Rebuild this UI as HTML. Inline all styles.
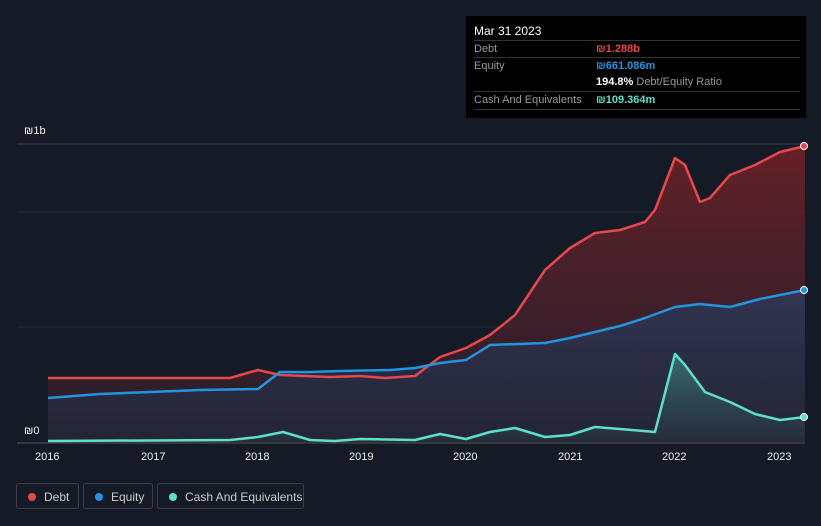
<!DOCTYPE html>
<html><head><meta charset="utf-8"><style>
body{margin:0;width:821px;height:526px;background:#151b26;font-family:"Liberation Sans",sans-serif;overflow:hidden;position:relative}
.tt{position:absolute;left:466px;top:16px;width:340px;height:102px;background:#000;}
.tt .h{position:absolute;left:8px;top:8px;color:#fff;font-size:12px}
.row{position:absolute;left:8px;width:326px;border-top:1px solid #333;height:17px;font-size:11px;color:#999;line-height:17px}
.row span{position:absolute;left:122px;font-weight:bold}
.leg{position:absolute;top:483px;height:26px;border:1px solid #3a3f4a;border-radius:3px;color:#ccc;font-size:12px;line-height:26px;box-sizing:border-box}
.leg i{position:absolute;left:11px;top:9px;width:8px;height:8px;border-radius:50%}
.leg b{font-weight:normal;position:absolute;left:27px}
.ax{position:absolute;color:#eee;font-size:11px}
</style></head><body>
<svg width="821" height="526" style="position:absolute;left:0;top:0">
<defs>
<linearGradient id="gd" x1="0" y1="0" x2="0" y2="1"><stop offset="0" stop-color="#7a2226" stop-opacity=".8"/><stop offset="1" stop-color="#3a2230" stop-opacity=".5"/></linearGradient>
<linearGradient id="ge" x1="0" y1="0" x2="0" y2="1"><stop offset="0" stop-color="#2d3a5a" stop-opacity=".8"/><stop offset="1" stop-color="#222638" stop-opacity=".8"/></linearGradient>
<linearGradient id="gc" x1="0" y1="0" x2="0" y2="1"><stop offset="0" stop-color="#3f8a80" stop-opacity=".7"/><stop offset="1" stop-color="#2a3a45" stop-opacity=".4"/></linearGradient>
</defs>
<line x1="17" y1="144" x2="805" y2="144" stroke="#3a3f4a"/>
<line x1="17" y1="212" x2="805" y2="212" stroke="#262b36"/>
<line x1="17" y1="327" x2="805" y2="327" stroke="#262b36"/>
<line x1="17" y1="443" x2="805" y2="443" stroke="#555"/>
<polygon fill="url(#gd)" points="48,442 48,378 230,378 258,370 280,375 330,377 360,376 385,378 415,376 440,357 466,348 490,335 515,315 545,270 570,248 595,233 620,230 645,222 655,210 675,158 685,165 700,202 710,198 730,175 755,165 780,152 805,146 805,442"/>
<polygon fill="url(#ge)" points="48,442 48,398 100,394 150,392 200,390 258,389 280,372 310,372 340,371 390,370 415,368 440,363 466,360 490,345 545,343 570,338 595,332 620,326 645,318 675,307 700,304 730,307 760,299 805,290 805,442"/>
<polygon fill="url(#gc)" points="48,442 48,441 230,440 258,437 283,432 310,440 335,441 360,439 415,440 440,434 466,439 490,432 515,428 545,437 570,435 595,427 620,429 655,432 675,354 685,365 705,392 730,402 755,414 780,420 805,417 805,442"/>
<polyline fill="none" stroke="#e5484d" stroke-width="2.5" stroke-linejoin="round" points="48,378 230,378 258,370 280,375 330,377 360,376 385,378 415,376 440,357 466,348 490,335 515,315 545,270 570,248 595,233 620,230 645,222 655,210 675,158 685,165 700,202 710,198 730,175 755,165 780,152 805,146"/>
<polyline fill="none" stroke="#2394df" stroke-width="2.5" stroke-linejoin="round" points="48,398 100,394 150,392 200,390 258,389 280,372 310,372 340,371 390,370 415,368 440,363 466,360 490,345 545,343 570,338 595,332 620,326 645,318 675,307 700,304 730,307 760,299 805,290"/>
<polyline fill="none" stroke="#5ce0cc" stroke-width="2.5" stroke-linejoin="round" points="48,441 230,440 258,437 283,432 310,440 335,441 360,439 415,440 440,434 466,439 490,432 515,428 545,437 570,435 595,427 620,429 655,432 675,354 685,365 705,392 730,402 755,414 780,420 805,417"/>
<circle cx="804" cy="146" r="3.5" fill="#e5484d" stroke="#fff" stroke-width="1"/>
<circle cx="804" cy="290" r="3.5" fill="#2394df" stroke="#fff" stroke-width="1"/>
<circle cx="804" cy="417" r="3.5" fill="#5ce0cc" stroke="#fff" stroke-width="1"/>
</svg>
<div class="ax" style="left:24px;top:125px">₪1b</div>
<div class="ax" style="left:24px;top:425px">₪0</div>
<div class="ax" style="left:35px;top:451px">2016</div>
<div class="ax" style="left:141px;top:451px">2017</div>
<div class="ax" style="left:245px;top:451px">2018</div>
<div class="ax" style="left:349px;top:451px">2019</div>
<div class="ax" style="left:453px;top:451px">2020</div>
<div class="ax" style="left:558px;top:451px">2021</div>
<div class="ax" style="left:662px;top:451px">2022</div>
<div class="ax" style="left:767px;top:451px">2023</div>
<div class="tt"><div class="h">Mar 31 2023</div>
<div class="row" style="top:24px">Debt<span style="color:#e5484d">₪1.288b</span></div>
<div class="row" style="top:41px">Equity<span style="color:#2394df">₪661.086m</span></div>
<div class="row" style="top:58px;border-top:none"><span style="color:#fff">194.8% <b style="color:#999;font-weight:normal">Debt/Equity Ratio</b></span></div>
<div class="row" style="top:75px">Cash And Equivalents<span style="color:#5ce0cc">₪109.364m</span></div>
<div class="row" style="top:93px;height:0"></div>
</div>
<div class="leg" style="left:16px;width:63px"><i style="background:#e5484d"></i><b>Debt</b></div>
<div class="leg" style="left:83px;width:70px"><i style="background:#2394df"></i><b>Equity</b></div>
<div class="leg" style="left:157px;width:147px"><i style="background:#5ce0cc"></i><b>Cash And Equivalents</b></div>
</body></html>
